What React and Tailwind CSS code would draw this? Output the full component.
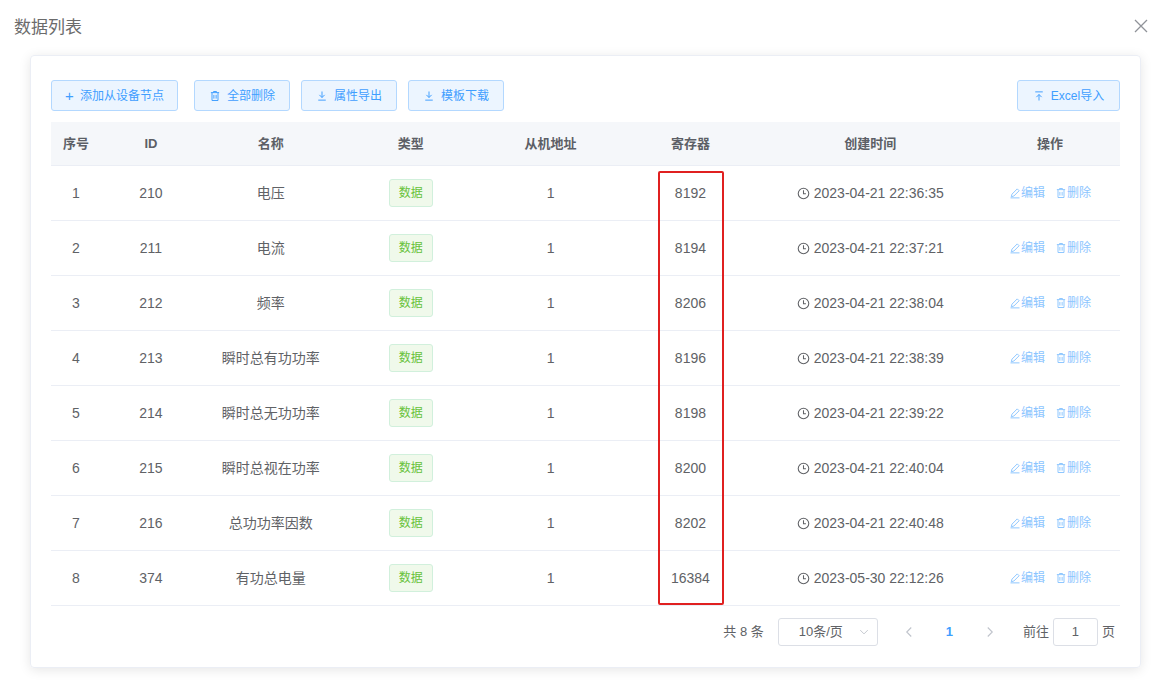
import React from "react";

const rows = [
  [1, 210, "电压", 8192, "2023-04-21 22:36:35"],
  [2, 211, "电流", 8194, "2023-04-21 22:37:21"],
  [3, 212, "频率", 8206, "2023-04-21 22:38:04"],
  [4, 213, "瞬时总有功功率", 8196, "2023-04-21 22:38:39"],
  [5, 214, "瞬时总无功功率", 8198, "2023-04-21 22:39:22"],
  [6, 215, "瞬时总视在功率", 8200, "2023-04-21 22:40:04"],
  [7, 216, "总功功率因数", 8202, "2023-04-21 22:40:48"],
  [8, 374, "有功总电量", 16384, "2023-05-30 22:12:26"],
];

const cols = ["w-[50px]", "w-[100px]", "w-[140px]", "w-[140px]", "w-[140px]", "w-[140px]", "w-[220px]", "w-[140px]"];
const heads = ["序号", "ID", "名称", "类型", "从机地址", "寄存器", "创建时间", "操作"];

const Trash = ({ c = "w-3 h-3" }) => (
  <svg className={c} viewBox="0 0 16 16" fill="none" stroke="currentColor" strokeWidth="1.3">
    <path d="M2.5 3.5h11M6 3.5V2h4v1.5M4 3.5v10.5h8V3.5M6.5 6.5v5M9.5 6.5v5" />
  </svg>
);
const Down = () => (
  <svg className="w-3 h-3" viewBox="0 0 16 16" fill="none" stroke="currentColor" strokeWidth="1.3">
    <path d="M8 2v8M4.5 6.5L8 10l3.5-3.5M3 13.5h10" />
  </svg>
);
const Up = () => (
  <svg className="w-3 h-3" viewBox="0 0 16 16" fill="none" stroke="currentColor" strokeWidth="1.3">
    <path d="M8 14V6M4.5 9.5L8 6l3.5 3.5M3 2.5h10" />
  </svg>
);

function Btn({ icon, children, w }) {
  return (
    <button className={`${w} h-[31px] flex items-center justify-center gap-1.5 rounded-[3px] border border-[#b3d8ff] bg-[#ecf5ff] text-[#409eff] text-[12px]`}>
      {icon}
      <span>{children}</span>
    </button>
  );
}

export default function App() {
  return (
    <div className="w-[1171px] h-[681px] bg-white relative text-[#606266]" style={{ fontFamily: "'Liberation Sans','Noto Sans CJK SC',sans-serif" }}>
      <div className="flex justify-between pl-[14px] pr-[22px] pt-[16px] h-[55px] items-start">
        <span className="text-[17px] text-[#6b6b6b] leading-[24px]">数据列表</span>
        <svg className="w-[16px] h-[16px] mt-[2px] text-[#909399]" viewBox="0 0 16 16" stroke="currentColor" strokeWidth="1.3">
          <path d="M2 2l12 12M14 2L2 14" />
        </svg>
      </div>
      <div className="ml-[30px] w-[1111px] h-[613px] rounded-[4px] border border-[#ebeef5] shadow-[0_2px_12px_rgba(0,0,0,0.1)] px-[20px] pt-[24px] relative">
        <div className="flex items-center">
          <div className="flex">
            <Btn w="w-[127px]" icon={<span className="text-[15px] leading-none">+</span>}>添加从设备节点</Btn>
            <div className="ml-[16px]"><Btn w="w-[96px]" icon={<Trash />}>全部删除</Btn></div>
            <div className="ml-[11px]"><Btn w="w-[96px]" icon={<Down />}>属性导出</Btn></div>
            <div className="ml-[11px]"><Btn w="w-[96px]" icon={<Down />}>模板下载</Btn></div>
          </div>
          <div className="ml-auto">
            <Btn w="w-[103px]" icon={<Up />}>Excel导入</Btn>
          </div>
        </div>
        <div className="mt-[11px] text-[14px]">
          <div className="flex h-[44px] bg-[#f5f7fa] border-b border-[#ebeef5] font-bold text-[13px] text-[#5c5f66]">
            {heads.map((h, i) => (
              <div key={i} className={`${cols[i]} flex items-center justify-center`}>{h}</div>
            ))}
          </div>
          {rows.map((r) => (
            <div key={r[0]} className="flex h-[55px] border-b border-[#ebeef5]">
              <div className={`${cols[0]} flex items-center justify-center`}>{r[0]}</div>
              <div className={`${cols[1]} flex items-center justify-center`}>{r[1]}</div>
              <div className={`${cols[2]} flex items-center justify-center`}>{r[2]}</div>
              <div className={`${cols[3]} flex items-center justify-center`}>
                <span className="h-[28px] px-[9px] flex items-center rounded-[3px] border border-[#d1f0dc] bg-[#f0f9eb] text-[#67c23a] text-[12px]">数据</span>
              </div>
              <div className={`${cols[4]} flex items-center justify-center`}>1</div>
              <div className={`${cols[5]} flex items-center justify-center`}>{r[3]}</div>
              <div className={`${cols[6]} flex items-center justify-center gap-1`}>
                <svg className="w-[13px] h-[13px]" viewBox="0 0 16 16" fill="none" stroke="currentColor" strokeWidth="1.3">
                  <circle cx="8" cy="8" r="6.5" />
                  <path d="M8 4v4.3h3" />
                </svg>
                {r[4]}
              </div>
              <div className={`${cols[7]} flex items-center justify-center gap-[10px] text-[12px] text-[#8cc5ff]`}>
                <span className="flex items-center">
                  <svg className="w-3 h-3" viewBox="0 0 16 16" fill="none" stroke="currentColor" strokeWidth="1.3">
                    <path d="M3 13l1-3.5L11 2.5l2.5 2.5L6.5 12zM2 14.5h12" />
                  </svg>
                  编辑
                </span>
                <span className="flex items-center">
                  <Trash />
                  删除
                </span>
              </div>
            </div>
          ))}
        </div>
        <div className="flex items-center justify-end mt-[12px] text-[13px] text-[#606266] pr-[5px]">
          <span className="mr-[14px]">共 8 条</span>
          <div className="w-[100px] h-[28px] border border-[#dcdfe6] rounded-[3px] flex items-center justify-between pl-[20px] pr-[8px]">
            <span>10条/页</span>
            <svg className="w-[10px] h-[10px] text-[#c0c4cc]" viewBox="0 0 16 16" fill="none" stroke="currentColor" strokeWidth="1.5"><path d="M2 5l6 6 6-6" /></svg>
          </div>
          <div className="flex items-center ml-[26px] gap-[32px]">
            <svg className="w-[10px] h-[12px] text-[#c0c4cc]" viewBox="0 0 10 16" fill="none" stroke="currentColor" strokeWidth="1.5"><path d="M8 2L2 8l6 6" /></svg>
            <span className="text-[#409eff] font-bold">1</span>
            <svg className="w-[10px] h-[12px] text-[#c0c4cc]" viewBox="0 0 10 16" fill="none" stroke="currentColor" strokeWidth="1.5"><path d="M2 2l6 6-6 6" /></svg>
          </div>
          <span className="ml-[28px]">前往</span>
          <div className="ml-[4px] w-[45px] h-[28px] border border-[#dcdfe6] rounded-[3px] flex items-center justify-center">1</div>
          <span className="ml-[4px]">页</span>
        </div>
        <div className="absolute left-[627px] top-[115px] w-[66px] h-[434px] border-2 border-[#e02020] rounded-[2px]" />
      </div>
    </div>
  );
}
